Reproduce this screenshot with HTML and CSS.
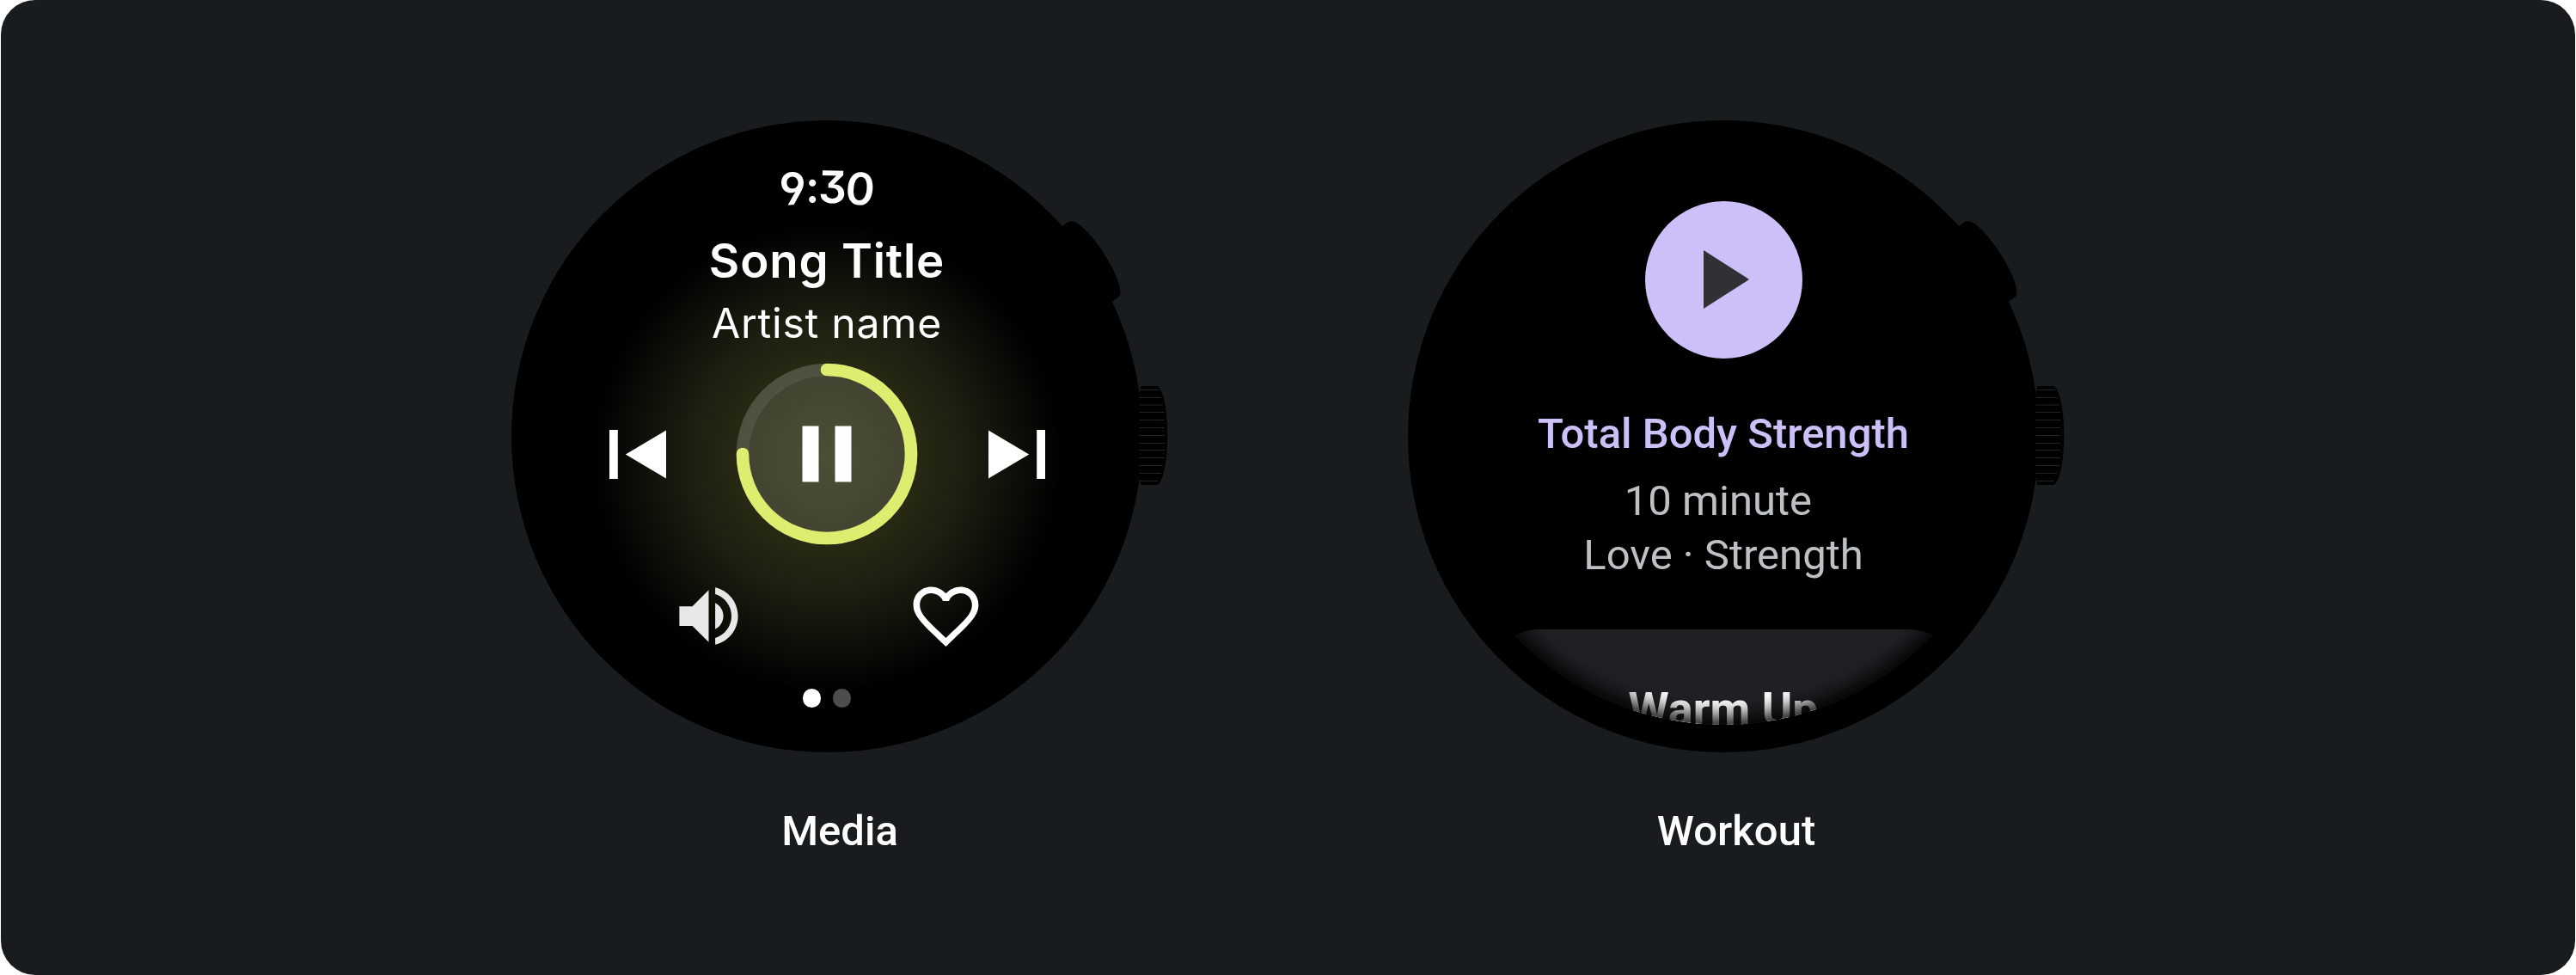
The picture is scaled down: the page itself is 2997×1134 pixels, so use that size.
FILE: index.html
```html
<!DOCTYPE html>
<html lang="en">
<head>
<meta charset="utf-8">
<title>Wear examples</title>
<link rel="stylesheet" href="styles.css">
</head>
<body>
<svg class="defs" aria-hidden="true">
  <symbol id="hardware" viewBox="595.5 140 764 735">
    <path d="M1230 268 L1236.7 262.7 L1243.3 258 Q1246.5 256.3 1250.7 258 C1270 266 1305.500 322 1304 341 Q1303.500 344.500 1301.700 345.700 L1295 350.300 L1270 352Z"/>
    <path d="M1326 459 L1327.500 450.500 Q1328 449 1330 449 H1346 C1354 450 1358.700 478 1358.700 506.500 C1358.700 535 1354 563 1346 564 H1330 Q1328 564 1327.500 562.500 L1326 554Z"/>
    <path stroke="#222425" stroke-width="1" d="M1327 453.500H1349M1326 462.500H1351M1326 471H1353M1326 479.500H1355M1326 488.500H1355M1326 497.500H1355M1326 506.500H1355M1326 515.500H1355M1326 523.500H1355M1326 532.500H1355M1326 541.500H1353.500M1326 550.500H1351M1327 559.500H1347"/>
  </symbol>
</svg>
<main class="panel">
  <figure class="example">
    <div class="watch">
      <div class="screen media">
        <div class="time"><span class="nine">9</span><span class="colon">:</span><span class="three">3</span><span class="zero">0</span></div>
        <div class="song">Song Title</div>
        <div class="artist">Artist name</div>
        <div class="controls">
          <svg width="66" height="57" viewBox="0 0 66 57" fill="#fff"><path d="M0 0H9.800V57H0ZM66 .5V56.500L18.800 28.500Z"/></svg>
          <svg width="212" height="212" viewBox="-106 -106 212 212" fill="none">
            <circle r="105.300" fill="#fff" fill-opacity=".12"/>
            <circle r="98" stroke="#fff" stroke-opacity=".08" stroke-width="14.600"/>
            <path d="M0 -98A98 98 0 1 1 -98 0" stroke="#dced6f" stroke-width="14.600" stroke-linecap="round"/>
            <path d="M-28.500 -32.500H-9.500V32.500H-28.500ZM9.500 -32.500H28.500V32.500H9.500Z" fill="#fff"/>
          </svg>
          <svg width="66" height="57" viewBox="0 0 66 57" fill="#fff"><path d="M56.200 0H66V57H56.200ZM0 .5V56.500L47.200 28.500Z"/></svg>
        </div>
        <div class="actions">
          <svg width="91" height="91" viewBox="0 0 24 24" fill="#e8e8e8"><path d="M3 9v6h4l5 5V4L7 9H3zm13.500 3c0-1.770-1.020-3.290-2.500-4.030v8.050c1.480-.73 2.500-2.250 2.500-4.020zM14 3.230v2.060c2.890.86 5 3.540 5 6.710s-2.110 5.850-5 6.710v2.060c4.010-.91 7-4.490 7-8.770s-2.990-7.860-7-8.770z"/></svg>
          <svg width="91" height="91" viewBox="0 0 24 24" fill="#fff" fill-rule="evenodd"><path d="M16.500 3c-1.740 0-3.410.81-4.500 2.090C10.910 3.810 9.240 3 7.500 3 4.420 3 2 5.420 2 8.500c0 3.780 3.100 6.200 10 12.850C18.900 14.700 22 12.280 22 8.500 22 5.420 19.580 3 16.500 3zM12 18.700C6.300 13.300 4 11.400 4 8.500 4 6.500 5.500 5 7.500 5c1.540 0 3.040.99 3.570 2.360h1.870C13.460 5.990 14.960 5 16.500 5c2 0 3.500 1.500 3.500 3.500 0 2.900-2.300 4.800-8 10.200z"/></svg>
        </div>
        <div class="dots"><span class="dot active"></span><span class="dot"></span></div>
      </div>
      <svg class="hardware"><use href="#hardware"/></svg>
    </div>
    <figcaption>Media</figcaption>
  </figure>
  <figure class="example">
    <div class="watch">
      <div class="screen workout">
        <div class="play"><svg width="53" height="68" viewBox="0 0 53 68" fill="#303134"><path d="M0 0L53 34L0 68Z"/></svg></div>
        <div class="name">Total Body Strength</div>
        <div class="detail">10 minute&nbsp;<br>Love · Strength</div>
        <div class="card">Warm Up</div>
      </div>
      <svg class="hardware"><use href="#hardware"/></svg>
    </div>
    <figcaption>Workout</figcaption>
  </figure>
</main>
</body>
</html>
```
FILE: styles.css
```css
* { box-sizing: border-box; }

body {
  margin: 0;
  background: #fff;
  font-family: Roboto, sans-serif;
  font-size: 49px;
}

svg { display: block; flex: none; }

.defs { position: absolute; width: 0; height: 0; }

.panel {
  height: 1134px;
  margin: 0 1px;
  padding-top: 140px;
  border-radius: 40px;
  background: #191c1e;
  display: flex;
  justify-content: center;
  align-items: flex-start;
  gap: 279px;
}

.example { width: 764px; margin: 0; }

.watch {
  position: relative;
  width: 734px;
  height: 735px;
  padding: 32.5px 32px;
  border-radius: 50%;
  background: #000;
}

.hardware {
  position: absolute;
  left: 0;
  top: 0;
  width: 764px;
  height: 735px;
}

figcaption {
  margin-top: 61.5px;
  line-height: 60px;
  font-weight: 500;
  color: #fff;
  text-align: center;
}

.screen {
  position: relative;
  width: 670px;
  height: 670px;
  border-radius: 50%;
  overflow: hidden;
  display: flex;
  flex-direction: column;
  align-items: center;
  color: #fff;
  text-align: center;
  white-space: nowrap;
}

.media {
  padding-top: 13px;
  font-family: Inter, sans-serif;
  background: radial-gradient(circle 270px at 335px 359px,
    rgb(52, 55, 26) 0, rgb(39, 41, 20) 39%, rgb(28, 30, 16) 60%,
    rgb(13, 14, 8) 82%, rgb(1, 1, 0) 99.5%, #000 100%);
}

.time {
  display: flex;
  font-size: 51.5px;
  line-height: 62px;
  font-weight: 560;
  font-feature-settings: "ss01", "cv04";
  letter-spacing: -1px;
}
.nine { transform: translateY(2px) rotate(-5deg); }
.three { transform: rotate(1deg); }
.zero { transform: translateY(2px) rotate(6deg); }

.song {
  margin-top: 22.8px;
  font-size: 54.6px;
  line-height: 66px;
  font-weight: 560;
  letter-spacing: .8px;
}

.artist {
  margin-top: 10.9px;
  font-size: 48.2px;
  line-height: 58px;
  letter-spacing: .7px;
}

.controls {
  width: 507px;
  margin-top: 17px;
  display: flex;
  align-items: center;
  justify-content: space-between;
}

.actions {
  width: 367px;
  margin-top: 37px;
  display: flex;
  justify-content: space-between;
}

.dots { display: flex; gap: 13.5px; margin-top: 39px; }
.dot { width: 21.5px; height: 21.5px; border-radius: 50%; background: #4d4d4d; }
.dot.active { background: #fff; }

.workout { padding-top: 61px; background: #000; }
.workout::after {
  content: "";
  position: absolute;
  inset: 0;
  border-radius: 50%;
  box-shadow: inset 0 -3px 24px 6px #000;
}

.play {
  flex: none;
  width: 183px;
  height: 183px;
  padding-left: 7px;
  border-radius: 50%;
  background: #cdc0f8;
  display: flex;
  align-items: center;
  justify-content: center;
}

.name {
  margin-top: 57px;
  line-height: 62.6px;
  font-weight: 500;
  color: #cdc0f8;
}

.detail {
  margin-top: 14.8px;
  line-height: 63px;
  color: #bdc1c6;
}

.card {
  flex: none;
  width: 563px;
  height: 200px;
  margin-top: 55px;
  padding-top: 60.7px;
  border-radius: 68px;
  background: #202125;
  font-size: 54px;
  line-height: 64px;
  font-weight: 700;
}
```
